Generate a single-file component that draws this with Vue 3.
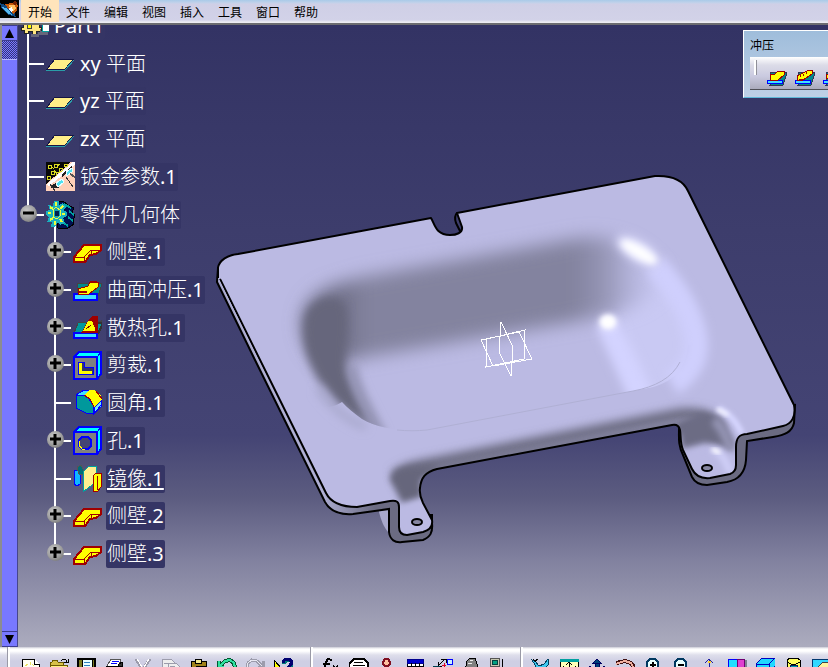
<script setup>
import { ref } from 'vue'

const menus = ['开始', '文件', '编辑', '视图', '插入', '工具', '窗口', '帮助']
const activeMenu = ref('开始')

// Each icon is a list of [path, fill, stroke, stroke width].
const R = '#a00000'
const Y = '#ffff00'
const T = '#00a0a0'
const B = '#0000ff'
const C = '#40e0ff'
const K = '#000'
const N = 'none'

const icons = {
  part: [
    ['M4 8H8V4H12V8H16V4H20V8H21V12H19V16H21V20H16V24H12V20H8V22H4V19H1V16H3V12H1V8Z', '#ffe680', '#222', 1],
    ['M11 23H18V21H20V18H21V20H28V24H19V26H11Z', '#66667a', N, 0],
    ['M22 12H29V20H22Z', '#fff', T, 1],
    ['M7 12H11V17H7Z', Y, '#444', 1]
  ],
  plane: [
    ['M1 20L9 10H28L19 20Z', '#ffee88', '#151545', 1],
    ['M0 21H19L28 11', N, '#2a9da8', 1]
  ],
  params: [
    ['M0 0H29V29H0Z', '#ffd0b8', N, 0],
    ['M0 0H25L0 22Z', '#080808', N, 0],
    ['M2 3H5V6H2ZM8 2H11V5H8ZM13 6H16V9H13ZM5 9H8V12H5ZM10 10H13V13H10ZM18 2H21V4H18ZM1 14H4V17H1ZM5 4L8 7M11 4L14 2M8 8L10 11', N, '#d8d820', 1],
    ['M0 23L27 0H29V3L3 24Z', '#fff', N, 0],
    ['M16 14L26 5M5 25L17 18M13 25H7', N, '#222', 2],
    ['M20 10L26 6L27 9L21 14ZM10 21L16 17L18 20L12 25Z', '#50e0f0', '#e8ffff', 1],
    ['M20 15L27 25M4 22L9 29', N, '#333', 1],
    ['M24 12L29 15', N, '#555', 2]
  ],
  body: [
    ['M11 1H17L22 5L28 8L26 12L29 16L27 20L28 24L22 28H12Z', '#001050', K, 1],
    ['M18 4L25 8M23 11L28 15M22 17L27 21M18 23L22 26', N, T, 2],
    ['M8 1H13V5L17 3L20 7L17 10L21 12V16L17 18L19 23L14 25L12 22L9 27H5L6 22L1 22L3 17L0 15V11L4 10L2 5L7 6Z', '#18b0c0', N, 0],
    ['M10 2V6M4 7L7 9M2 13H5M4 20L7 18M9 25V21M16 22L14 19M19 14H16M17 6L14 9', N, '#e8ff40', 2],
    ['M7 10L10 7L14 10V16L11 19L7 17Z', '#18a0b0', '#e8ff40', 1],
    ['M9 11H13V16H9Z', '#002050', N, 0]
  ],
  wall: [
    ['M1 19L11 7H28V12L23 16L17 17L12 24H1Z', Y, R, 2],
    ['M1 19H11L18 12H28M11 19V24M18 12V16', N, R, 1]
  ],
  stamp: [
    ['M5 8H28V12L24 24H4Z', '#00888c', '#444', 1],
    ['M1 19H24V25H1Z', C, B, 2],
    ['M5 19V14L15 11L17 7H25V12L16 19Z', Y, R, 1],
    ['M17 7H24M6 17H14', N, R, 2]
  ],
  louver: [
    ['M5 10L1 20H25L28 13V8Z', '#00989c', '#444', 1],
    ['M24 10H29V12L25 21', N, '#333', 2],
    ['M1 20H24V25H1Z', C, B, 2],
    ['M10 18L14 10L20 3H24V19H9Z', R, R, 1],
    ['M10 18L15 8H19L22 15V18Z', Y, N, 0],
    ['M13 16L18 12', N, '#800', 1]
  ],
  cutout: [
    ['M6 1H28V23L24 28H1V6Z', '#00ffff', B, 2],
    ['M1 6H24V28H1Z', '#808080', B, 2],
    ['M5 11H11V16H20V23H5Z', '#333366', B, 1],
    ['M6 12H9V20H19V23H6Z', Y, N, 0],
    ['M24 6L28 1', N, B, 1]
  ],
  fillet: [
    ['M3 6L11 1H19L26 6L29 17L21 25L18 23Z', C, B, 1],
    ['M3 7L11 6L16 10L20 16V25L13 24L3 19Z', '#00989c', B, 1],
    ['M11 6L17 1H21L27 5L29 10L21 18L17 10Z', Y, N, 0],
    ['M11 6L17 10L21 18M23 2L29 10V14', N, R, 1],
    ['M22 18L28 12V16L21 25Z', '#70e8ff', B, 1]
  ],
  hole: [
    ['M6 1H28V23L24 28H1V6Z', '#00ffff', B, 2],
    ['M1 6H24V28H1Z', '#808080', B, 2],
    ['M9 11H15L18 14V20L15 23H9L6 20V14Z', '#444474', B, 2],
    ['M6 15V19L9 23H12', N, Y, 1],
    ['M24 6L28 1', N, B, 1]
  ],
  mirror: [
    ['M1 6H7V20L4 22L1 20Z', '#10b8ff', B, 1],
    ['M4 3L8 1L10 5V10H6Z', '#006c78', '#555', 1],
    ['M10 8L16 2H23V18L10 28Z', '#ffee90', T, 1],
    ['M20 12L23 9H28V23L25 27H20Z', Y, R, 1],
    ['M24 12V26', N, R, 1]
  ]
}

const tree = ref([
  { label: 'Part1', icon: 'part', level: 0, opens: true },
  { label: 'xy 平面', icon: 'plane', level: 1 },
  { label: 'yz 平面', icon: 'plane', level: 1 },
  { label: 'zx 平面', icon: 'plane', level: 1 },
  { label: '钣金参数.1', icon: 'params', level: 1 },
  { label: '零件几何体', icon: 'body', level: 1, knob: '-', last: true, opens: true },
  { label: '侧壁.1', icon: 'wall', level: 2, knob: '+' },
  { label: '曲面冲压.1', icon: 'stamp', level: 2, knob: '+' },
  { label: '散热孔.1', icon: 'louver', level: 2, knob: '+' },
  { label: '剪裁.1', icon: 'cutout', level: 2, knob: '+' },
  { label: '圆角.1', icon: 'fillet', level: 2 },
  { label: '孔.1', icon: 'hole', level: 2, knob: '+' },
  { label: '镜像.1', icon: 'mirror', level: 2, current: true },
  { label: '侧壁.2', icon: 'wall', level: 2, knob: '+' },
  { label: '侧壁.3', icon: 'wall', level: 2, knob: '+', last: true }
])

const split = (label) => label.match(/[\u4e00-\u9fff]+|[^\u4e00-\u9fff]+/g)
const isHan = (text) => /[\u4e00-\u9fff]/.test(text)

const G = '#9c9cac'
const toolGroups = [
  [
    { name: '新建', art: [['M1 1H13L18 6V20H1Z', '#fffff4', K, 1], ['M13 1V6H18', '#fff', K, 1], ['M4 8L7 6M9 4V7M6 9H12M13 8L11 6', N, '#e8e060', 1]] },
    { name: '打开', art: [['M1 4H3L4 2H8L9 4H14V8H1Z', '#d8c048', '#6a5800', 1], ['M1 7H18V20H1Z', '#fff080', '#6a5800', 1], ['M12 3L14 1L17 2L18 4M15 4H19V1', N, K, 1]] },
    { name: '保存', art: [['M1 1H18V20H1Z', '#7a7a20', K, 2], ['M5 1H15V20H5Z', '#e8ffff', K, 1], ['M7 4H13M7 7H13', N, '#3080c0', 1]] },
    { name: '打印', art: [['M6 1H16L14 8H2Z', '#fff', '#555', 1], ['M7 3H14M6 5H12', N, B, 1], ['M13 7L17 4L18 9H13Z', '#333', K, 1], ['M1 8H17V14H1Z', '#bbb', K, 1]] },
    { name: '剪切', art: [['M3 1L9 11M17 1L10 11', N, G, 3], ['M4 1L9 9M16 1L11 9', N, '#fff', 1]] },
    { name: '复制', art: [['M1 1H10L13 4V12H1Z', '#eee', G, 1], ['M7 5H15L19 9V16H7Z', '#eee', G, 1], ['M3 5H7M9 8H14', N, G, 1]] },
    { name: '粘贴', art: [['M2 3H17V18H2Z', '#a08018', K, 1], ['M6 1H12V5H6Z', '#f4e890', K, 1], ['M7 8H17V16H7Z', '#fff', K, 1]] },
    { name: '撤消', art: [['M2 3V9H7M3 8L8 3L13 2L17 5L18 10', N, '#005830', 4], ['M2 3V9H7M3 8L8 3L13 2L17 5L18 10', N, '#30e0a0', 2]] },
    { name: '重做', art: [['M18 3V9H13M17 8L12 3L7 2L3 5L2 10', N, G, 3], ['M17 8L12 3L7 2L3 5L2 10', N, '#e8e8f2', 1]] },
    { name: '帮助指针', art: [['M1 2L9 11H1Z', Y, K, 1], ['M11 6V4L14 2H17L19 4V7L16 10', N, '#007878', 4], ['M10 5V3L13 1H16L18 3V6L15 10', N, '#000070', 3]] }
  ],
  [
    { name: '公式', art: [['M11 2L7 1L5 4L3 12M2 6H9M12 8L17 12M17 8L12 12', N, K, 2]] },
    { name: '注释', art: [['M5 1H15L19 5V10H0V6Z', '#fff', K, 2], ['M5 4H14M4 7H16', N, K, 1]] },
    { name: '人员', art: [['M8 1H11L13 4V6L11 8H8L6 6V4Z', '#ffc0a0', '#801020', 2], ['M7 9H13V15H7Z', '#c8b020', '#444', 1]] },
    { name: '表格', art: [['M2 2H18V18H2Z', '#fff', K, 1], ['M2 1H18V5H2Z', '#0000d0', '#000090', 1], ['M2 8H18M6 5V16M10 5V16M14 5V16', N, K, 1]] },
    { name: '链接', art: [['M6 7L12 1M8 1H13V5M5 4V8H9', N, K, 1], ['M14 1H19V6H14Z', '#c8f0ff', B, 1], ['M0 8H6V12H0Z', T, '#004050', 1], ['M9 7H13M11 5V9', N, '#e00020', 1]] },
    { name: '锁定', art: [['M6 3L9 0H14L16 6L17 12H3L5 8Z', '#808080', K, 1], ['M9 2H12M7 5H11', N, '#eee', 1]] },
    { name: '系统', art: [['M1 0H10V8H1Z', '#c8c8b0', '#555', 1], ['M3 2H8V6H3Z', '#00a080', '#004040', 1], ['M13 1V10H17M2 11H20', N, K, 1]] }
  ],
  [
    { name: '飞行', art: [['M1 2L5 4L8 8L13 6L17 1L18 6L12 12H7Z', '#40c8f0', '#004060', 1], ['M2 1L5 4M7 1L4 3', N, K, 1]] },
    { name: '适应全部', art: [['M1 1H19V18H1Z', '#ffffb8', K, 1], ['M1 1H19V3H1Z', T, T, 1], ['M10 4V12M7 7L10 4L13 7M4 8V12M16 8V12', N, K, 1]] },
    { name: '平移', art: [['M10 1L6 5H14ZM8 5H12V9H8ZM3 8L0 11H6ZM17 8L14 11H20Z', '#004078', '#000060', 1]] },
    { name: '旋转', art: [['M1 5L6 4L10 3L16 5L19 9L17 12', N, '#401010', 4], ['M1 6L6 4L10 3L16 5L18 9', N, '#f0b0a0', 2]] },
    { name: '放大', art: [['M7 1H12L15 4V9L12 13H7L4 9V4Z', '#e8ffff', '#003860', 2], ['M7 7H13M10 4V10', N, K, 2]] },
    { name: '缩小', art: [['M7 1H12L15 4V9L12 13H7L4 9V4Z', '#e8ffff', '#003860', 2], ['M7 7H13', N, K, 2]] },
    { name: '法线视图', art: [['M10 1V12M6 5L10 1L14 5', N, '#2020a0', 1], ['M9 4H12', N, '#ffd020', 2]] },
    { name: '多视图', art: [['M3 2H20V13H3Z', '#808090', N, 0], ['M1 1H10V12H1Z', '#20e0ff', B, 1], ['M10 1H17V12H10Z', '#e040d0', '#700070', 1]] },
    { name: '等轴测视图', art: [['M1 6L7 0H20V8L15 13H1Z', '#20d8ff', '#0000c0', 1], ['M1 6H14L20 0M14 6V13', N, '#0000c0', 1]] },
    { name: '着色', art: [['M4 2L7 0H14L17 2V14H4Z', '#ffff60', K, 1], ['M4 4L8 6H13L17 4', N, K, 1], ['M7 7H14V13H7Z', '#00a0b0', '#002060', 1]] },
    { name: '隐藏', art: [['M1 1H20V14H1Z', '#30d8ff', '#003870', 1], ['M5 11L12 4H20V14Z', '#fff4a0', '#444', 1]] }
  ]
]

const stampTools = [
  { name: '曲面冲压', art: [['M5 1H20V5L17 14H4Z', '#00888c', '#335', 1], ['M1 9H16V12H1Z', C, B, 1], ['M4 9V4L9 3L12 0H18V4L12 9Z', Y, R, 1]] },
  { name: '凸圆', art: [['M5 1H20V5L17 14H4Z', '#00888c', '#335', 1], ['M1 9H16V12H1Z', C, B, 1], ['M3 9V5L15 -1H18V3L9 9Z', Y, R, 1], ['M6 4V6M9 3V5M12 1V3M5 8H9', N, R, 1]] },
  { name: '曲线冲压', art: [['M5 1H20V5L17 14H4Z', '#00888c', '#335', 1], ['M1 9H16V12H1Z', C, B, 1], ['M4 7V4L10 2V8Z', Y, R, 1]] }
]
</script>

<template>
  <div class="app">
    <header class="menubar">
      <svg class="logo" viewBox="0 0 19 18" shape-rendering="crispEdges" aria-hidden="true">
        <path d="M0 0H19V18H0Z" fill="#000" />
        <path d="M0 3L8 6L14 12L16 17L9 15L2 9Z" fill="#104880" />
        <path d="M2 7L8 9L12 15L7 13Z" fill="#58b8f0" />
        <path d="M5 4L12 3L18 5L17 10L13 14L9 10Z" fill="#c85808" />
        <path d="M9 5H15L16 8L13 11L10 8Z" fill="#ffc060" />
        <path d="M8 9L12 7L13 10L11 12Z" fill="#fff" />
        <path d="M12 3L15 1L17 3L15 5Z" fill="#702000" />
      </svg>
      <nav class="menus">
        <button
          v-for="menu in menus"
          :key="menu"
          type="button"
          class="menu"
          :class="{ active: menu === activeMenu }"
          @click="activeMenu = menu"
        >{{ menu }}</button>
      </nav>
    </header>

    <main class="workspace">
      <div class="scrollbar">
        <button type="button" class="scroll-button" aria-label="向上滚动">
          <svg viewBox="0 0 9 9"><path d="M4.500 0L9 9H0Z" /></svg>
        </button>
        <div class="scroll-track"></div>
        <div class="scroll-thumb"></div>
        <button type="button" class="scroll-button" aria-label="向下滚动">
          <svg viewBox="0 0 9 9"><path d="M0 0H9L4.500 9Z" /></svg>
        </button>
      </div>

      <div class="viewport">
        <svg class="model" viewBox="18 25 810 622" preserveAspectRatio="xMinYMin slice" aria-hidden="true">
          <defs>
            <filter id="soft2" x="-50%" y="-50%" width="200%" height="200%"><feGaussianBlur stdDeviation="2" /></filter>
            <filter id="soft3" x="-50%" y="-50%" width="200%" height="200%"><feGaussianBlur stdDeviation="3" /></filter>
            <filter id="soft5" x="-50%" y="-50%" width="200%" height="200%"><feGaussianBlur stdDeviation="5" /></filter>
            <filter id="soft9" x="-50%" y="-50%" width="200%" height="200%"><feGaussianBlur stdDeviation="9" /></filter>
            <linearGradient id="wall" gradientUnits="userSpaceOnUse" x1="300" y1="0" x2="680" y2="0">
              <stop offset="0" stop-color="#696980" />
              <stop offset="0.120" stop-color="#72728a" />
              <stop offset="0.170" stop-color="#83839f" />
              <stop offset="0.720" stop-color="#83839f" />
              <stop offset="0.800" stop-color="#9595b5" />
              <stop offset="0.860" stop-color="#afafd5" />
              <stop offset="0.920" stop-color="#c2c2ec" />
              <stop offset="1" stop-color="#c8c8f2" />
            </linearGradient>
            <linearGradient id="edge" gradientUnits="userSpaceOnUse" x1="325" y1="0" x2="375" y2="0">
              <stop offset="0" stop-color="#a9a9cd" />
              <stop offset="1" stop-color="#6b6b82" />
            </linearGradient>
            <clipPath id="face">
              <path d="M218 268C219 260 228 255 238 254L431 218C435 225 436 235 450 235C456 235 463 233 462 227L457 213L655 176C675 175 684 182 688 191L794 405C796 416 792 424 783 426L747 434C739 434 736 438 736 447V465C736 471 733 473 730 474L710 478C700 479 695 475 692 469L683 450C680 443 681 436 680 430C679 426 677 424 672 425L437 469C425 472 421 478 420 488C419 495 421 499 423 503L432 520C433 526 430 530 423 532L407 535C401 535 399 532 399 527V507C399 502 397 500 390 501L357 507C343 507 331 503 326 493L218 278Z" />
            </clipPath>
            <clipPath id="basin">
              <path d="M200 150H800V345H688C687 365 676 381 653 387L633 391L530 411L427 430C400 432 378 428 362 419C354 413 347 408 342 402C330 410 310 410 290 400L200 340Z" />
            </clipPath>
          </defs>

          <path d="M379 505L389 503V533C384 528 381 520 379 512Z" fill="#a9a9cd" />
          <path d="M218 268L217 282L255 360L325 502C330 511 340 515 353 514L389 509V532C390 540 395 543 402 542L423 540C430 537 433 533 432 523V515H410L405 490L330 480L230 270Z" fill="url(#edge)" stroke="#000" stroke-width="2" />
          <path d="M795 405L794 423C792 432 785 435 773 437L747 441L746 460C745 473 738 480 727 482L707 485C698 485 694 481 692 477L683 455C678 445 679 438 679 428L700 420Z" fill="#6b6b82" stroke="#000" stroke-width="2" />

          <g clip-path="url(#face)">
            <path d="M200 150H828V560H200Z" fill="#bbbae3" />

            <g clip-path="url(#basin)">
              <path d="M612 285C640 260 668 270 684 310C702 350 690 385 640 400L625 350Z" fill="#c9c9f3" filter="url(#soft5)" />
              <path d="M335 285L362 277L520 249L575 239C610 233 640 245 660 272C662 296 640 306 610 314L578 321L365 357C345 360 325 370 312 352C294 325 300 297 335 285Z" fill="url(#wall)" filter="url(#soft9)" />
              <path d="M305 318C310 298 335 292 345 305C352 325 343 345 347 368C352 388 362 405 380 440L358 424L335 402L318 380C306 360 301 340 305 318Z" fill="#66667c" filter="url(#soft5)" />
              <path d="M352 366C356 388 366 405 382 436" fill="none" stroke="#8c8cab" stroke-width="8" filter="url(#soft5)" />
              <path d="M607 322L646 408" fill="none" stroke="#d3d3ff" stroke-width="24" filter="url(#soft5)" />
              <ellipse cx="608" cy="322" rx="9" ry="8" fill="#f0f0ff" filter="url(#soft3)" />
              <ellipse cx="608" cy="322" rx="7" ry="6" fill="#fff" filter="url(#soft2)" />
            </g>
            <path d="M318 388C330 406 348 421 366 427" fill="none" stroke="#a8a8cc" stroke-width="7" filter="url(#soft5)" />
            <path d="M655 265C678 290 694 318 696 342C697 358 690 372 672 384" fill="none" stroke="#cfcffd" stroke-width="24" filter="url(#soft5)" />
            <ellipse cx="638" cy="251" rx="24" ry="10" fill="#e2e2ff" filter="url(#soft5)" transform="rotate(31 638 251)" />
            <ellipse cx="639" cy="252" rx="20" ry="6" fill="#fff" filter="url(#soft3)" transform="rotate(31 639 252)" />
            <path d="M397 430C407 431 417 431 427 430L633 391C655 387 672 378 680 362" fill="none" stroke="#b0b0d4" stroke-width="1" />

            <path d="M395 477C410 466 425 466 437 463L665 418C690 411 712 414 720 430" fill="none" stroke="#6a6a80" stroke-width="13" filter="url(#soft5)" />
            <path d="M420 470L670 424L700 420L690 432L430 474Z" fill="#6a6a80" filter="url(#soft3)" />
            <path d="M390 480C390 468 405 466 440 464L421 480L422 497L402 503Z" fill="#66667c" filter="url(#soft3)" />
            <path d="M400 508L423 501L436 522L425 537H398Z" fill="#bbbae3" filter="url(#soft3)" />
            <path d="M678 424L700 413C722 412 728 432 734 442L733 449L705 443L682 449Z" fill="#6c6c84" filter="url(#soft3)" />
            <path d="M714 420C722 427 727 438 731 452" fill="none" stroke="#9494b4" stroke-width="9" filter="url(#soft3)" />
            <path d="M684 455L708 448L736 458V474L710 482L695 475Z" fill="#bbbae3" filter="url(#soft3)" />
            <path d="M718 408C730 413 737 423 742 434" fill="none" stroke="#d6d6ff" stroke-width="6" filter="url(#soft2)" />
            <path d="M717 409L728 415" fill="none" stroke="#fff" stroke-width="3" filter="url(#soft2)" />
            <path d="M712 449C722 452 726 462 731 474" fill="none" stroke="#d4d4fc" stroke-width="6" filter="url(#soft3)" />
            <path d="M712 449L720 453" stroke="#fff" stroke-width="4" filter="url(#soft2)" />
          </g>

          <g fill="none" stroke="#000" stroke-width="2" stroke-linejoin="round">
            <path d="M218 278V268C219 260 228 255 238 254L431 218C435 225 436 235 450 235C456 235 463 233 462 227L457 213L655 176C675 175 684 182 688 191L794 405C796 416 792 424 783 426L747 434C739 434 736 438 736 447V465C736 471 733 473 730 474L710 478C700 479 695 475 692 469L683 450C680 443 681 436 680 430C679 426 677 424 672 425L437 469C425 472 421 478 420 488C419 495 421 499 423 503L432 520C433 526 430 530 423 532L407 535C401 535 399 532 399 527V507C399 502 397 500 390 501L357 507C343 507 331 503 326 493L220 279" />
            <path d="M457 213C454 216 455 220 456 223L460 231" />
            <ellipse cx="707" cy="468" rx="5" ry="3" fill="#8585a0" />
            <ellipse cx="417" cy="522" rx="5" ry="3" fill="#8585a0" />
          </g>
          <path d="M219 280L326 499" fill="none" stroke="#b4b4d8" stroke-width="1" />
          <g fill="none" stroke="#fff" stroke-width="1" shape-rendering="crispEdges">
            <path d="M487 339L525 330L524 359L486 367Z" />
            <path d="M481 340L519 332L532 359L493 366Z" />
            <path d="M501 322L513 347L511 376L499 352Z" />
          </g>
        </svg>

        <ul class="tree">
          <li
            v-for="node in tree"
            :key="node.label"
            class="row"
            :class="['level-' + node.level, { last: node.last }]"
          >
            <span v-if="node.level" class="rail">
              <button v-if="node.knob" type="button" class="knob" :aria-label="node.label">
                <svg viewBox="0 0 17 17" aria-hidden="true">
                  <path d="M3 8H14" />
                  <path v-if="node.knob === '+'" d="M8 3V14" />
                </svg>
              </button>
            </span>
            <span class="icon" :class="{ opens: node.opens }">
              <svg viewBox="0 0 29 29" shape-rendering="crispEdges" aria-hidden="true">
                <path
                  v-for="(p, i) in icons[node.icon]"
                  :key="i"
                  :d="p[0]"
                  :fill="p[1]"
                  :stroke="p[2]"
                  :stroke-width="p[3]"
                />
              </svg>
            </span>
            <span class="label" :class="{ current: node.current }"><span
              v-for="(text, i) in split(node.label)"
              :key="i"
              :class="{ han: isHan(text) }"
            >{{ text }}</span></span>
          </li>
        </ul>
      </div>

      <section class="palette">
        <h2 class="palette-title">冲压</h2>
        <div class="palette-tools">
          <span class="grip"></span>
          <button v-for="tool in stampTools" :key="tool.name" type="button" class="palette-tool" :aria-label="tool.name">
            <svg viewBox="0 -2 21 17" shape-rendering="crispEdges" aria-hidden="true">
              <path v-for="(p, i) in tool.art" :key="i" :d="p[0]" :fill="p[1]" :stroke="p[2]" :stroke-width="p[3]" />
            </svg>
          </button>
        </div>
      </section>
    </main>

    <footer class="toolbar">
      <div v-for="(group, g) in toolGroups" :key="g" class="tool-group">
        <button v-for="tool in group" :key="tool.name" type="button" class="tool" :aria-label="tool.name">
          <svg viewBox="0 0 20 20" shape-rendering="crispEdges" aria-hidden="true">
            <path v-for="(p, i) in tool.art" :key="i" :d="p[0]" :fill="p[1]" :stroke="p[2]" :stroke-width="p[3]" />
          </svg>
        </button>
      </div>
    </footer>
  </div>
</template>

<style>
body {
  overflow: hidden;
}
</style>

<style scoped>
.app {
  display: flex;
  flex-direction: column;
  height: 100vh;
  overflow: hidden;
  font-family: "Noto Sans", "Noto Sans CJK SC", sans-serif;
}

button {
  margin: 0;
  padding: 0;
  border: 0;
  background: none;
  font: inherit;
  color: inherit;
}

svg {
  display: block;
}

.menubar {
  display: flex;
  flex: none;
  height: 25px;
  box-sizing: border-box;
  border-bottom: 2px solid #6c6c70;
  background: linear-gradient(#a9cae8 0, #c4d2ea 3px, #cfcfe6 4px, #d2d2e8 20px, #ececf2 22px);
}

.logo {
  width: 19px;
  height: 18px;
  margin-right: 2px;
}

.menus {
  display: flex;
}

.menu {
  width: 38px;
  height: 22px;
  padding-top: 3px;
  font-size: 12px;
  line-height: 18px;
  color: #000;
}

.menu.active {
  background: #ffe4bb;
}

.workspace {
  position: relative;
  display: flex;
  flex: 1;
  min-height: 0;
  overflow: hidden;
}

.scrollbar {
  display: flex;
  flex: none;
  flex-direction: column;
  width: 18px;
  box-sizing: border-box;
  border-left: 2px solid #8c8c90;
  border-right: 1px solid #46468c;
  background: #7878ff;
}

.scroll-button {
  display: flex;
  flex: none;
  align-items: center;
  justify-content: center;
  height: 16px;
  border: 1px solid #3c3c90;
  border-width: 1px 0;
  background: #7878ff;
}

.scroll-button svg {
  width: 9px;
  height: 9px;
}

.scroll-track {
  flex: none;
  height: 18px;
  background: repeating-conic-gradient(#7878ff 0 25%, #35357a 0 50%) 0 0 / 2px 2px;
}

.scroll-thumb {
  flex: 1;
  border-top: 1px solid #b8b8ff;
}

.viewport {
  position: relative;
  flex: 1;
  min-width: 0;
  overflow: hidden;
  background: linear-gradient(#333364 0%, #3d3d6c 33%, #444474 66%, #5c5c80 76%, #81819f 86%, #acacbe 100%);
}

.model {
  position: absolute;
  inset: 0;
  width: 100%;
  height: 100%;
}

.tree {
  position: relative;
  display: grid;
  grid-auto-rows: 1fr;
  height: 566px;
  margin: -18px 0 0;
  padding: 0 0 0 2px;
  list-style: none;
}

.row {
  display: flex;
  align-items: center;
  min-height: 0;
}

.level-2 {
  padding-left: 27px;
}

.rail {
  display: flex;
  align-items: center;
  align-self: stretch;
  width: 24px;
  margin-right: 2px;
  background:
    linear-gradient(#fff, #fff) 8px 50% / 16px 2px no-repeat,
    linear-gradient(#fff, #fff) 7px 0 / 2px 100% no-repeat;
}

.last .rail {
  background:
    linear-gradient(#fff, #fff) 8px 50% / 16px 2px no-repeat,
    linear-gradient(#fff, #fff) 7px 0 / 2px 50% no-repeat;
}

.knob {
  width: 17px;
  height: 17px;
  margin-bottom: 3px;
  border-radius: 50%;
  background: radial-gradient(circle at 40% 35%, #c8c8c8 0, #a0a0a0 50%, #606060 100%);
}

.knob svg {
  width: 17px;
  height: 17px;
}

.knob path {
  fill: none;
  stroke: #000;
  stroke-width: 3;
}

.icon {
  display: flex;
  align-items: center;
  align-self: stretch;
  width: 29px;
  margin-right: 4px;
}

.icon svg {
  width: 29px;
  height: 29px;
}

.icon.opens {
  background: linear-gradient(#fff, #fff) 8px 100% / 2px 12px no-repeat;
}

.level-0 .icon.opens {
  background-position: 7px 100%;
}

.label {
  padding: 0 1px;
  border-radius: 2px;
  background: #353565;
  font-size: 20px;
  line-height: 28px;
  color: #fff;
  white-space: pre;
}

.han {
  font-weight: 300;
}

.label.current {
  text-decoration: underline 2px;
  text-underline-offset: 2px;
}

.palette {
  position: absolute;
  top: 5px;
  right: 0;
  width: 85px;
  height: 68px;
  box-sizing: border-box;
  overflow: hidden;
  padding: 6px 0 6px 6px;
  border: 1px solid #fff;
  border-right: 0;
  border-bottom-color: #60b8d8;
  background: linear-gradient(#9fbddb, #bfd0e6);
}

.palette-title {
  margin: 0 0 2px;
  font-size: 12px;
  font-weight: 400;
  line-height: 18px;
  color: #000;
}

.palette-tools {
  display: flex;
  height: 32px;
  border-bottom: 1px solid #505058;
  background: linear-gradient(#fff, #dcdce8 25%, #cacae0 60%, #aaaabc);
}

.grip {
  flex: none;
  width: 2px;
  height: 15px;
  margin: 3px 9px 0 4px;
  background: #fff;
  border-right: 1px solid #909098;
}

.palette-tool {
  flex: none;
  width: 28px;
}

.palette-tool svg {
  width: 21px;
  height: 17px;
  margin-top: 8px;
}

.toolbar {
  display: flex;
  flex: none;
  height: 20px;
  overflow: hidden;
  background: linear-gradient(#c8c8d4 0, #fff 2px, #fff 4px, #dedeeb 8px, #cfcfe4 14px, #cfcfe4 20px);
}

.tool-group {
  display: flex;
  flex: none;
  padding: 11px 8px 0 4px;
  border-left: 2px solid #fff;
  box-shadow: -1px 0 #9a9aa6;
}

.tool-group:first-child {
  margin-left: 8px;
  padding-right: 14px;
  padding-left: 7px;
}

.tool {
  flex: none;
  width: 28px;
  height: 20px;
}

.tool svg {
  width: 20px;
  height: 20px;
  margin: 0 auto;
}
</style>
